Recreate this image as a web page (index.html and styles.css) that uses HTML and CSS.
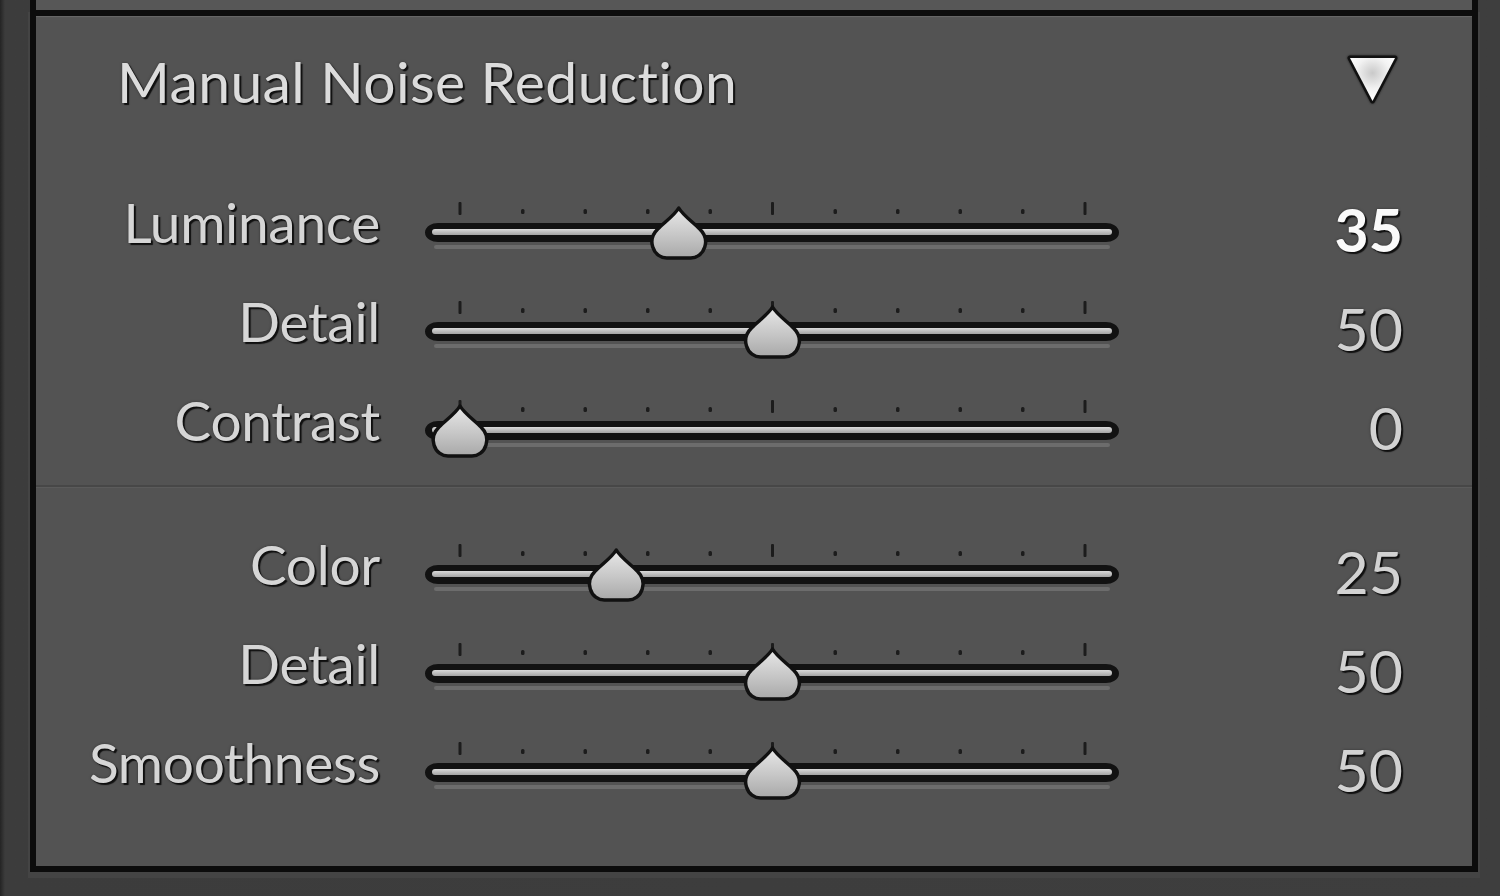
FILE: index.html
```html
<!DOCTYPE html>
<html lang="en">
<head>
<meta charset="utf-8">
<title>Manual Noise Reduction</title>
<link rel="stylesheet" href="styles.css">
</head>
<body>
<svg class="defs" width="0" height="0" aria-hidden="true">
  <defs>
    <linearGradient id="thumbFill" x1="0" y1="0" x2="0" y2="1">
      <stop offset="0" stop-color="#e8e8e8"/>
      <stop offset="0.55" stop-color="#c6c6c6"/>
      <stop offset="1" stop-color="#a8a8a8"/>
    </linearGradient>
    <linearGradient id="coreFill" x1="0" y1="0" x2="0" y2="1">
      <stop offset="0" stop-color="#dadada"/>
      <stop offset="1" stop-color="#a4a4a4"/>
    </linearGradient>
    <radialGradient id="triFill" cx="0.5" cy="0.35" r="0.6">
      <stop offset="0" stop-color="#c9c9c9"/>
      <stop offset="0.6" stop-color="#f2f2f2"/>
      <stop offset="1" stop-color="#ffffff"/>
    </radialGradient>
    <g id="track">
      <rect x="12" y="62" width="676" height="4" rx="2" fill="#6c6c6c"/>
      <path d="M3,49.5 Q3,45 8,42 Q11,40 16,40 H684 Q689,40 692,42 Q697,45 697,49.5 Q697,54 692,57 Q689,59 684,59 H16 Q11,59 8,57 Q3,54 3,49.5 Z" fill="#121212"/>
      <rect x="10" y="46" width="680" height="6" rx="3" fill="url(#coreFill)"/>
      <g fill="#1c1c1c">
        <rect x="36.5" y="19" width="3" height="13" rx="1"/>
        <rect x="349" y="19" width="3" height="13" rx="1"/>
        <rect x="661.5" y="19" width="3" height="13" rx="1"/>
        <rect x="99" y="26" width="3.5" height="5" rx="1.5"/>
        <rect x="161.5" y="26" width="3.5" height="5" rx="1.5"/>
        <rect x="224" y="26" width="3.5" height="5" rx="1.5"/>
        <rect x="286.5" y="26" width="3.5" height="5" rx="1.5"/>
        <rect x="411.5" y="26" width="3.5" height="5" rx="1.5"/>
        <rect x="474" y="26" width="3.5" height="5" rx="1.5"/>
        <rect x="536.5" y="26" width="3.5" height="5" rx="1.5"/>
        <rect x="599" y="26" width="3.5" height="5" rx="1.5"/>
      </g>
    </g>
    <path id="thumb" d="M0,-24 C4,-17 14,-10 21,-3 C27,3 28,9 26,15 C24,22 18,26 12,26 L-12,26 C-18,26 -24,22 -26,15 C-28,9 -27,3 -21,-3 C-14,-10 -4,-17 0,-24 Z" fill="url(#thumbFill)" stroke="#111" stroke-width="3.5" stroke-linejoin="round"/>
  </defs>
</svg>

<div class="frame">
  <div class="prev-panel"></div>
  <section class="panel">
    <header class="panel-header">
      <h2 class="panel-title">Manual Noise Reduction</h2>
      <svg class="disclosure" width="64" height="64" viewBox="0 0 64 64" aria-hidden="true">
        <path d="M10,10 L55,10 L32.5,53 Z" fill="url(#triFill)" stroke="#111" stroke-width="5" stroke-linejoin="round" paint-order="stroke"/>
      </svg>
    </header>

    <div class="group">
      <div class="row">
        <span class="label">Luminance</span>
        <svg class="slider" width="700" height="99" viewBox="0 0 700 99"><use href="#track"/><use href="#thumb" x="256.75" y="49"/></svg>
        <span class="value active">35</span>
      </div>
      <div class="row">
        <span class="label">Detail</span>
        <svg class="slider" width="700" height="99" viewBox="0 0 700 99"><use href="#track"/><use href="#thumb" x="350.5" y="49"/></svg>
        <span class="value">50</span>
      </div>
      <div class="row">
        <span class="label">Contrast</span>
        <svg class="slider" width="700" height="99" viewBox="0 0 700 99"><use href="#track"/><use href="#thumb" x="38" y="49"/></svg>
        <span class="value">0</span>
      </div>
    </div>

    <div class="separator"></div>

    <div class="group">
      <div class="row">
        <span class="label">Color</span>
        <svg class="slider" width="700" height="99" viewBox="0 0 700 99"><use href="#track"/><use href="#thumb" x="194.25" y="49"/></svg>
        <span class="value">25</span>
      </div>
      <div class="row">
        <span class="label">Detail</span>
        <svg class="slider" width="700" height="99" viewBox="0 0 700 99"><use href="#track"/><use href="#thumb" x="350.5" y="49"/></svg>
        <span class="value">50</span>
      </div>
      <div class="row">
        <span class="label">Smoothness</span>
        <svg class="slider" width="700" height="99" viewBox="0 0 700 99"><use href="#track"/><use href="#thumb" x="350.5" y="49"/></svg>
        <span class="value">50</span>
      </div>
    </div>
  </section>
</div>
</body>
</html>
```

FILE: styles.css
```css
html, body {
  margin: 0;
  padding: 0;
}

body {
  width: 1500px;
  height: 896px;
  overflow: hidden;
  background: linear-gradient(to right, #242424 0, #3c3c3c 5px, #3e3e3e 100%);
  font-family: "Lato", "Open Sans", "Noto Sans", sans-serif;
}

.defs {
  position: absolute;
  width: 0;
  height: 0;
  overflow: hidden;
}

.frame {
  margin-left: 30px;
  width: 1448px;
  display: flex;
  flex-direction: column;
}

.prev-panel {
  height: 10px;
  background: #575757;
  border-left: 6px solid #0c0c0c;
  border-right: 6px solid #0c0c0c;
}

.panel {
  height: 850px;
  background: #535353;
  border: 6px solid #0c0c0c;
  box-shadow: inset 0 2px 1px -1px rgba(255, 255, 255, 0.12),
              0 4px 0 2px #444444;
  display: flex;
  flex-direction: column;
}

.panel-header {
  height: 167px;
  box-sizing: border-box;
  padding: 0 68px 36px 81px;
  display: flex;
  align-items: center;
  justify-content: space-between;
}

.panel-title {
  margin: 0;
  font-weight: 400;
  font-size: 57px;
  line-height: 1;
  color: #dcdcdc;
  letter-spacing: 0.4px;
  text-shadow: 2px 2px 1px rgba(0, 0, 0, 0.8), 0 0 3px rgba(0, 0, 0, 0.35);
}

.disclosure {
  display: block;
  margin-bottom: 4px;
  filter: drop-shadow(0 0 1px rgba(0, 0, 0, 0.6));
}

.group {
  display: flex;
  flex-direction: column;
}

.row {
  height: 99px;
  display: grid;
  grid-template-columns: 344px 742px 1fr;
  align-items: center;
  padding-right: 69px;
}

.label {
  justify-self: end;
  padding-bottom: 20px;
  font-size: 55px;
  line-height: 1;
  color: #d6d6d6;
  letter-spacing: -0.3px;
  text-shadow: 2px 2px 1px rgba(0, 0, 0, 0.8), 0 0 3px rgba(0, 0, 0, 0.35);
}

.slider {
  display: block;
  justify-self: end;
}

.value {
  justify-self: end;
  padding-bottom: 7px;
  font-size: 59px;
  line-height: 1;
  color: #d2d2d2;
  text-shadow: 2px 2px 1px rgba(0, 0, 0, 0.8), 0 0 3px rgba(0, 0, 0, 0.35);
}

.value.active {
  color: #fafafa;
  font-weight: 700;
}

.separator {
  margin-top: 5px;
  height: 2px;
  background: #474747;
  border-bottom: 1px solid #5b5b5b;
  margin-bottom: 37px;
}
```
